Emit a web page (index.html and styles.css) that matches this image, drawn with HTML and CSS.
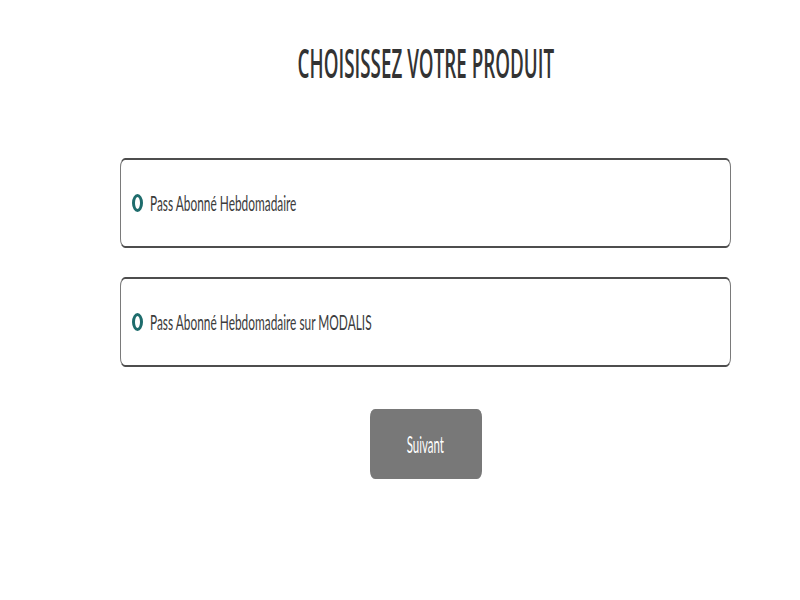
FILE: index.html
```html
<!DOCTYPE html>
<html lang="fr">
<head>
<meta charset="utf-8">
<title>Choisissez votre produit</title>
<link rel="stylesheet" href="styles.css">
</head>
<body>
<main class="page">
  <h1 class="title"><span class="squeeze title-text">CHOISISSEZ VOTRE PRODUIT</span></h1>
  <div class="options">
    <label class="option">
      <span class="radio"></span>
      <span class="label squeeze">Pass Abonné Hebdomadaire</span>
    </label>
    <label class="option">
      <span class="radio"></span>
      <span class="label squeeze">Pass Abonné Hebdomadaire sur MODALIS</span>
    </label>
  </div>
  <div class="actions">
    <button class="next" type="button"><span class="squeeze next-text">Suivant</span></button>
  </div>
</main>
</body>
</html>
```

FILE: styles.css
```css
html, body {
  margin: 0;
  padding: 0;
  background: #ffffff;
}
body {
  font-family: Lato, "Open Sans", "Liberation Sans", sans-serif;
  color: #333333;
}
.page {
  width: 611px;
  margin-left: 120px;
  padding-top: 40px;
}
.squeeze {
  display: inline-block;
  transform-origin: center center;
  white-space: nowrap;
}
.title {
  margin: 0;
  height: 45px;
  text-align: center;
  font-family: "Open Sans", Lato, sans-serif;
  font-size: 40px;
  font-weight: 600;
  color: #333333;
  line-height: 45px;
}
.title-text {
  transform: scaleX(0.47);
}
.options {
  display: flex;
  flex-direction: column;
  gap: 29px;
  margin-top: 73px;
}
.option {
  display: flex;
  align-items: center;
  box-sizing: border-box;
  height: 90px;
  border-top: 2px solid #4d4d4d;
  border-bottom: 2px solid #4d4d4d;
  border-left: 1px solid #7a7a7a;
  border-right: 1px solid #7a7a7a;
  border-radius: 5px / 9px;
  padding-left: 11px;
  padding-bottom: 1px;
}
.radio {
  flex: none;
  box-sizing: border-box;
  width: 11px;
  height: 18px;
  border: 3px solid #1e6c6c;
  border-radius: 50%;
}
.label {
  font-size: 22px;
  color: #3c3c3c;
  transform: scaleX(0.54);
  transform-origin: left center;
  margin-left: 7px;
}
.actions {
  display: flex;
  justify-content: center;
  margin-top: 42px;
}
.next {
  width: 112px;
  height: 70px;
  border: none;
  border-radius: 5px / 8px;
  background: #787878;
  color: #ffffff;
  font-family: Lato, "Open Sans", "Liberation Sans", sans-serif;
  font-size: 23px;
  padding: 0;
  cursor: pointer;
}
.next-text {
  transform: scaleX(0.5);
}
```
